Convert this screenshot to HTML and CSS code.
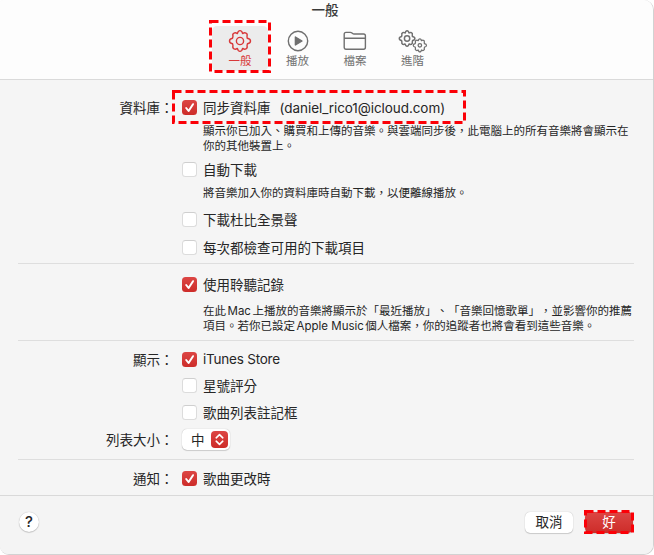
FILE: index.html
```
<!DOCTYPE html>
<html lang="zh-Hant">

<head>
    <meta charset="UTF-8">
    <meta name="viewport" content="width=device-width, initial-scale=1.0">
    <title>一般</title>
    <link rel="stylesheet" href="styles.css">
</head>

<body>

    <div class="window">
        <header class="toolbar">
            <h1 class="title">一般</h1>
            <nav class="tabs">
                <div class="tab active">
                    <svg class="icon" viewBox="0 0 24 24">
                        <path d="M10.2 2.6Q12 .6 13.8 2.6L14.6 4.6Q16.6 3.3 18 4.2Q19.7 4.9 19 7.2L19.2 9.2Q22.6 9.8 22.5 12Q22.6 14.2 19.4 14.8L19 16.8Q19.8 18.8 18 19.8Q16.6 20.8 14.7 19.4L13.8 21.4Q12 23.4 10.2 21.4L9.3 19.4Q7.4 20.8 6 19.8Q4.2 18.8 5 16.8L4.6 14.8Q1.4 14.2 1.5 12Q1.4 9.8 4.6 9.2L5 7.2Q4.2 5 6 4.2Q7.4 3.3 9.4 4.6Z"/>
                        <circle cx="12" cy="12" r="3.6"/>
                    </svg>
                    <span>一般</span>
                </div>
                <div class="tab">
                    <svg class="icon" viewBox="0 0 24 24">
                        <circle cx="12" cy="12" r="9.7"/>
                        <path class="fill" d="M9.4 8L16 12L9.4 16Z"/>
                    </svg>
                    <span>播放</span>
                </div>
                <div class="tab">
                    <svg class="icon" viewBox="0 0 24 24">
                        <path d="M1.2 18.3V5.2Q1.2 3.4 3 3.4H7.4Q8.3 3.4 9 4L9.6 4.5Q10.2 5 11 5H20.6Q22.4 5 22.4 6.8V18.3Q22.4 20.2 20.6 20.2H3Q1.2 20.2 1.2 18.3ZM1.2 9.2H22.4"/>
                    </svg>
                    <span>檔案</span>
                </div>
                <div class="tab">
                    <svg class="icon wide" viewBox="0 0 30 24">
                        <g transform="translate(.2 .6) scale(.74)">
                            <path d="M10.2 2.6Q12 .6 13.8 2.6L14.6 4.6Q16.6 3.3 18 4.2Q19.7 4.9 19 7.2L19.2 9.2Q22.6 9.8 22.5 12Q22.6 14.2 19.4 14.8L19 16.8Q19.8 18.8 18 19.8Q16.6 20.8 14.7 19.4L13.8 21.4Q12 23.4 10.2 21.4L9.3 19.4Q7.4 20.8 6 19.8Q4.2 18.8 5 16.8L4.6 14.8Q1.4 14.2 1.5 12Q1.4 9.8 4.6 9.2L5 7.2Q4.2 5 6 4.2Q7.4 3.3 9.4 4.6Z"/>
                            <circle cx="12" cy="12" r="3.6"/>
                        </g>
                        <g transform="translate(14.3 8.8) scale(.63)">
                            <path d="M10.2 2.6Q12 .6 13.8 2.6L14.6 4.6Q16.6 3.3 18 4.2Q19.7 4.9 19 7.2L19.2 9.2Q22.6 9.8 22.5 12Q22.6 14.2 19.4 14.8L19 16.8Q19.8 18.8 18 19.8Q16.6 20.8 14.7 19.4L13.8 21.4Q12 23.4 10.2 21.4L9.3 19.4Q7.4 20.8 6 19.8Q4.2 18.8 5 16.8L4.6 14.8Q1.4 14.2 1.5 12Q1.4 9.8 4.6 9.2L5 7.2Q4.2 5 6 4.2Q7.4 3.3 9.4 4.6Z"/>
                            <circle cx="12" cy="12" r="2.8"/>
                        </g>
                    </svg>
                    <span>進階</span>
                </div>
                <svg class="marker marker-tab"><rect x="1.5" y="1.5" width="59" height="50"/></svg>
            </nav>
        </header>

        <main>
            <section class="library">
                <div class="row">
                    <span class="label">資料庫：</span>
                    <span class="check checked"><svg viewBox="0 0 15 15"><path d="M4.2 8L6.6 11L11 4.2"/></svg></span>
                    <span class="text">同步資料庫<span class="account">(daniel_rico1@icloud.com)</span></span>
                    <svg class="marker marker-sync"><rect x="1.5" y="1.5" width="291" height="31"/></svg>
                </div>
                <p class="note">顯示你已加入、購買和上傳的音樂。與雲端同步後，此電腦上的所有音樂將會顯示在<br>你的其他裝置上。</p>
                <div class="row download">
                    <span class="label"></span>
                    <span class="check"></span>
                    <span class="text">自動下載</span>
                </div>
                <p class="note">將音樂加入你的資料庫時自動下載，以便離線播放。</p>
                <div class="row dolby">
                    <span class="label"></span>
                    <span class="check"></span>
                    <span class="text">下載杜比全景聲</span>
                </div>
                <div class="row">
                    <span class="label"></span>
                    <span class="check"></span>
                    <span class="text">每次都檢查可用的下載項目</span>
                </div>
            </section>

            <section class="history">
                <div class="row">
                    <span class="label"></span>
                    <span class="check checked"><svg viewBox="0 0 15 15"><path d="M4.2 8L6.6 11L11 4.2"/></svg></span>
                    <span class="text">使用聆聽記錄</span>
                </div>
                <p class="note">在此<span class="latin">Mac</span>上播放的音樂將顯示於「最近播放」、「音樂回憶歌單」，並影響你的推薦<br>項目。若你已設定<span class="latin">Apple Music</span>個人檔案，你的追蹤者也將會看到這些音樂。</p>
            </section>

            <section class="display">
                <div class="row">
                    <span class="label">顯示：</span>
                    <span class="check checked"><svg viewBox="0 0 15 15"><path d="M4.2 8L6.6 11L11 4.2"/></svg></span>
                    <span class="text store">iTunes Store</span>
                </div>
                <div class="row">
                    <span class="label"></span>
                    <span class="check"></span>
                    <span class="text">星號評分</span>
                </div>
                <div class="row">
                    <span class="label"></span>
                    <span class="check"></span>
                    <span class="text">歌曲列表註記框</span>
                </div>
                <div class="row">
                    <span class="label">列表大小：</span>
                    <span class="select">中
                        <span class="stepper"><svg viewBox="0 0 17 17"><path d="M5.2 6.8L8.5 3.7L11.8 6.8M5.2 10.2L8.5 13.3L11.8 10.2"/></svg></span>
                    </span>
                </div>
            </section>

            <section class="notice">
                <div class="row">
                    <span class="label">通知：</span>
                    <span class="check checked"><svg viewBox="0 0 15 15"><path d="M4.2 8L6.6 11L11 4.2"/></svg></span>
                    <span class="text">歌曲更改時</span>
                </div>
            </section>
        </main>

        <footer>
            <button type="button" class="help">?</button>
            <button type="button" class="btn">取消</button>
            <button type="button" class="btn primary">好<svg class="marker marker-ok"><rect x="1.5" y="1.5" width="47" height="21"/></svg></button>
        </footer>
    </div>

</body>

</html>
```
FILE: styles.css
```
* {
    box-sizing: border-box;
}

body {
    margin: 0;
    background-color: #fff;
    font-family: Inter, 'Noto Sans CJK TC', sans-serif;
    font-size: 13.5px;
    color: #262626;
    text-spacing-trim: space-all;
    text-autospace: no-autospace;
}

.window {
    width: 654px;
    height: 555px;
    display: flex;
    flex-direction: column;
    background-color: #f5f5f5;
    border-right: 1px solid #d2d2d2;
    border-bottom: 1px solid #d2d2d2;
    border-radius: 3px 10px 10px 9px;
    overflow: hidden;
}

.toolbar {
    height: 80px;
    flex: none;
    background-color: #fdfdfd;
    border-bottom: 1px solid #dadada;
}

.title {
    margin: 0;
    padding-right: 3px;
    height: 22px;
    line-height: 21px;
    font-size: 13.5px;
    font-weight: 500;
    text-align: center;
    color: #3a3a3a;
}

.tabs {
    position: relative;
    display: flex;
    padding: 4px 0 0 212px;
    gap: 1.5px;
}

.tab {
    width: 56px;
    height: 45px;
    display: flex;
    flex-direction: column;
    align-items: center;
    padding-top: 3px;
    border-radius: 5px;
    font-size: 11.5px;
    line-height: 13px;
    color: #707070;
}

.tab.active {
    background-color: #ececec;
    color: #d8393a;
}

.icon {
    width: 24px;
    height: 24px;
    margin-bottom: 2px;
    fill: none;
    stroke: currentColor;
    stroke-width: 1.4;
    stroke-linejoin: round;
}

.icon.wide {
    width: 30px;
}

.icon g {
    stroke-width: 2;
}

.icon .fill {
    fill: currentColor;
}

/* red dashed highlights */
.marker {
    position: absolute;
    fill: none;
    stroke: #fb0007;
    stroke-width: 3;
    stroke-dasharray: 8 4;
    pointer-events: none;
}

.marker-tab {
    left: 209px;
    top: -2px;
    width: 62px;
    height: 53px;
}

.marker-sync {
    left: 172px;
    top: -7px;
    width: 294px;
    height: 34px;
}

.marker-ok {
    left: -1px;
    top: -1px;
    width: 50px;
    height: 24px;
}

main {
    height: 415px;
    flex: none;
}

section {
    margin: 0 19px 0 18px;
    border-bottom: 1px solid #dedede;
}

.row {
    position: relative;
    display: flex;
    align-items: center;
    height: 20px;
    margin-left: -18px;
    white-space: nowrap;
}

.label {
    width: 173.5px;
    margin-right: 8.5px;
    padding-bottom: 1px;
    text-align: right;
}

.text {
    padding-bottom: 1px;
}

.check {
    width: 15px;
    height: 15px;
    flex: none;
    margin-right: 6px;
    border-radius: 3.5px;
    background-color: #fff;
    border: 1px solid #dcdcdc;
    border-top-color: #cfcfcf;
}

.check.checked {
    border: none;
    background: linear-gradient(#dc4644, #cd2c29);
}

.check svg {
    display: block;
    fill: none;
    stroke: #fff;
    stroke-width: 2;
    stroke-linecap: round;
    stroke-linejoin: round;
}

.account {
    margin-left: 9px;
    letter-spacing: -0.07px;
}

.store {
    letter-spacing: -0.22px;
}

.note {
    margin: 0 0 0 185px;
    font-size: 11.5px;
    line-height: 14.5px;
    white-space: nowrap;
}

.latin {
    margin: 0 1.5px;
}

.library {
    height: 184px;
    padding-top: 17px;
}

.library .note {
    margin-top: 7px;
}

.library .download {
    margin-top: 6px;
}

.library .dolby {
    margin-top: 9px;
    margin-bottom: 7.5px;
}

.history {
    height: 77px;
    padding-top: 10px;
}

.history .note {
    margin-top: 10px;
}

.display {
    height: 119px;
    padding-top: 8px;
    display: flex;
    flex-direction: column;
    gap: 6.7px;
}

.select {
    display: flex;
    align-items: center;
    justify-content: space-between;
    width: 48px;
    height: 21px;
    padding: 0 2px 0 9px;
    border-radius: 5px;
    background-color: #fff;
    box-shadow: 0 0 1px rgba(0, 0, 0, 0.3), 0 1px 1px rgba(0, 0, 0, 0.15);
}

.stepper {
    width: 17px;
    height: 17px;
    border-radius: 4px;
    background: linear-gradient(#dc4644, #cd2c29);
}

.stepper svg {
    display: block;
    fill: none;
    stroke: #fff;
    stroke-width: 1.6;
    stroke-linecap: round;
    stroke-linejoin: round;
}

.notice {
    padding-top: 8px;
    border-bottom: none;
}

footer {
    flex: 1;
    display: flex;
    align-items: flex-start;
    border-top: 1px solid #d9d9d9;
    padding: 16px 20px 0 19px;
    background-color: #f4f4f4;
}

button {
    border: none;
    padding: 0;
    font-family: inherit;
    color: #262626;
    background-color: #fff;
    box-shadow: 0 0 1px rgba(0, 0, 0, 0.3), 0 1px 1px rgba(0, 0, 0, 0.15);
}

.help {
    width: 20px;
    height: 20px;
    margin-right: auto;
    border-radius: 50%;
    font-size: 15px;
    font-weight: 500;
    line-height: 20px;
}

.btn {
    position: relative;
    width: 48px;
    height: 21px;
    padding-bottom: 1px;
    border-radius: 5px;
    font-size: 13.5px;
    line-height: 19px;
}

.btn.primary {
    margin-left: 12px;
    color: #fff;
    background: linear-gradient(#dc4644, #cd2c29);
}

.marker-ok {
    top: -2px;
}
```
